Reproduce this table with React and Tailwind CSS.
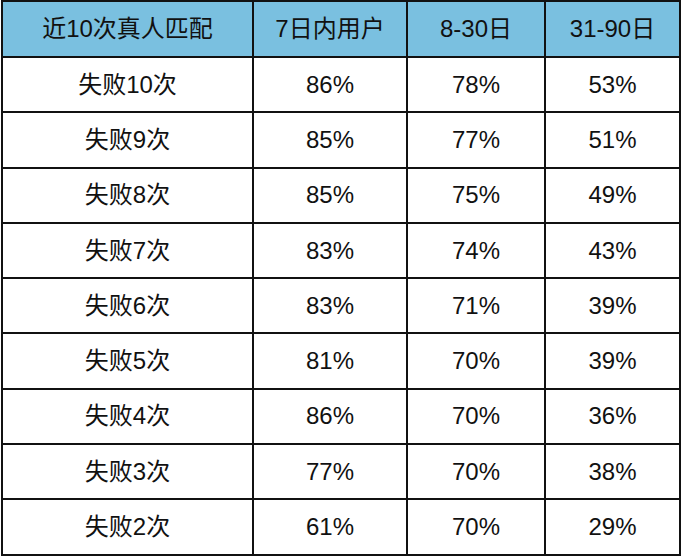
import React from "react";

const rows = [
  ["失败10次", "86%", "78%", "53%"],
  ["失败9次", "85%", "77%", "51%"],
  ["失败8次", "85%", "75%", "49%"],
  ["失败7次", "83%", "74%", "43%"],
  ["失败6次", "83%", "71%", "39%"],
  ["失败5次", "81%", "70%", "39%"],
  ["失败4次", "86%", "70%", "36%"],
  ["失败3次", "77%", "70%", "38%"],
  ["失败2次", "61%", "70%", "29%"],
];

const headers = ["近10次真人匹配", "7日内用户", "8-30日", "31-90日"];
const widths = ["w-[251px]", "w-[154px]", "w-[138px]", "w-[135px]"];

export default function App() {
  return (
    <div
      className="w-[683px] h-[557px] bg-white pl-[1px] text-[#111]"
      style={{ fontFamily: '"Liberation Sans", "Noto Sans CJK SC", sans-serif' }}
    >
      <table className="border-collapse table-fixed border-2 border-[#111] text-[24px]">
        <thead>
          <tr className="h-[56px] bg-[#7ac0e0]">
            {headers.map((h, i) => (
              <th key={h} className={`${widths[i]} border-2 border-[#111] font-normal text-center p-0`}>
                {h}
              </th>
            ))}
          </tr>
        </thead>
        <tbody>
          {rows.map((r) => (
            <tr key={r[0]} className="h-[55.3px]">
              {r.map((c, i) => (
                <td key={i} className="border-2 border-[#111] text-center p-0">
                  {c}
                </td>
              ))}
            </tr>
          ))}
        </tbody>
      </table>
    </div>
  );
}
